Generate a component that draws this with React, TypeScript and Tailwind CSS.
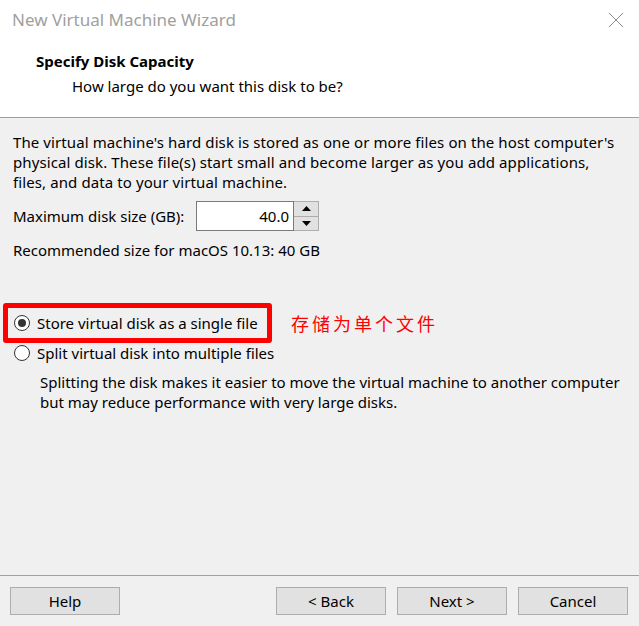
import React from "react";

const font = { fontFamily: '"Segoe UI", "Noto Sans", "Liberation Sans", sans-serif' };

function Radio({ checked }: { checked?: boolean }) {
  return (
    <span className="w-[16px] h-[16px] rounded-full border border-[#333333] bg-white flex items-center justify-center shrink-0">
      {checked && <span className="w-[8px] h-[8px] rounded-full bg-[#333333]" />}
    </span>
  );
}

function Btn({ label, className = "" }: { label: string; className?: string }) {
  return (
    <div
      className={
        "w-[110px] h-[28px] bg-[#e1e1e1] border border-[#adadad] flex items-center justify-center text-[15px] text-black " +
        className
      }
    >
      {label}
    </div>
  );
}

export default function App() {
  return (
    <div
      className="w-[639px] h-[626px] bg-[#f0f0f0] flex flex-col text-black overflow-hidden"
      style={font}
    >
      <div className="h-[118px] bg-white border-b border-[#a0a0a0] flex flex-col shrink-0">
        <div className="h-[40px] flex items-center justify-between pl-[12px] pr-[14px]">
          <span className="text-[17px] text-[#a0a0a0]">New Virtual Machine Wizard</span>
          <svg width="18" height="18" viewBox="0 0 18 18">
            <path d="M2 2 L16 16 M16 2 L2 16" stroke="#8a8a8a" strokeWidth="1" />
          </svg>
        </div>
        <div className="pl-[36px] pt-[11px] text-[15px] font-bold leading-[20px]">Specify Disk Capacity</div>
        <div className="pl-[72px] pt-[5px] text-[15px] leading-[20px]">How large do you want this disk to be?</div>
      </div>

      <div className="flex-1 flex flex-col px-[13px] pt-[14px] text-[15px] leading-[20px]">
        <p className="tracking-[0.1px]">
          The virtual machine's hard disk is stored as one or more files on the host computer's
          <br />
          physical disk. These file(s) start small and become larger as you add applications,
          <br />
          files, and data to your virtual machine.
        </p>
        <div className="flex items-center mt-[9px] h-[30px]">
          <span className="w-[183px]">Maximum disk size (GB):</span>
          <div className="flex h-[30px]">
            <div className="w-[98px] h-[30px] bg-white border border-[#7a7a7a] flex items-center justify-end pr-[4px]">
              40.0
            </div>
            <div className="w-[25px] h-[30px] flex flex-col border border-[#adadad] border-l-0">
              <div className="flex-1 bg-[#e1e1e1] border-b border-[#adadad] flex items-center justify-center">
                <svg width="9" height="5" viewBox="0 0 9 5">
                  <path d="M0 5 L4.5 0 L9 5 Z" fill="#000" />
                </svg>
              </div>
              <div className="flex-1 bg-[#e1e1e1] flex items-center justify-center">
                <svg width="9" height="5" viewBox="0 0 9 5">
                  <path d="M0 0 L4.5 5 L9 0 Z" fill="#000" />
                </svg>
              </div>
            </div>
          </div>
        </div>
        <div className="mt-[9px]">Recommended size for macOS 10.13: 40 GB</div>

        <div className="flex items-center mt-[43px] -ml-[10px]">
          <div className="h-[40px] w-[269px] border-[5px] border-[#ff0000] rounded-[3px] flex items-center pl-[6px] gap-[7px]">
            <Radio checked />
            <span>Store virtual disk as a single file</span>
          </div>
          <span
            className="ml-[19px] text-[18px] text-[#ff0000] tracking-[3px]"
            style={{ fontFamily: '"Noto Sans CJK SC", sans-serif' }}
          >
            存储为单个文件
          </span>
        </div>
        <div className="flex items-center gap-[7px] pl-[1px] mt-[0px] h-[20px]">
          <Radio />
          <span>Split virtual disk into multiple files</span>
        </div>
        <p className="pl-[27px] mt-[9px]">
          Splitting the disk makes it easier to move the virtual machine to another computer
          <br />
          but may reduce performance with very large disks.
        </p>
      </div>

      <div className="h-[51px] border-t border-[#a0a0a0] shrink-0 flex items-start pt-[11px] pl-[10px] pr-[11px]">
        <Btn label="Help" />
        <div className="flex-1" />
        <Btn label="< Back" />
        <Btn label="Next >" className="ml-[11px]" />
        <Btn label="Cancel" className="ml-[11px]" />
      </div>
    </div>
  );
}
